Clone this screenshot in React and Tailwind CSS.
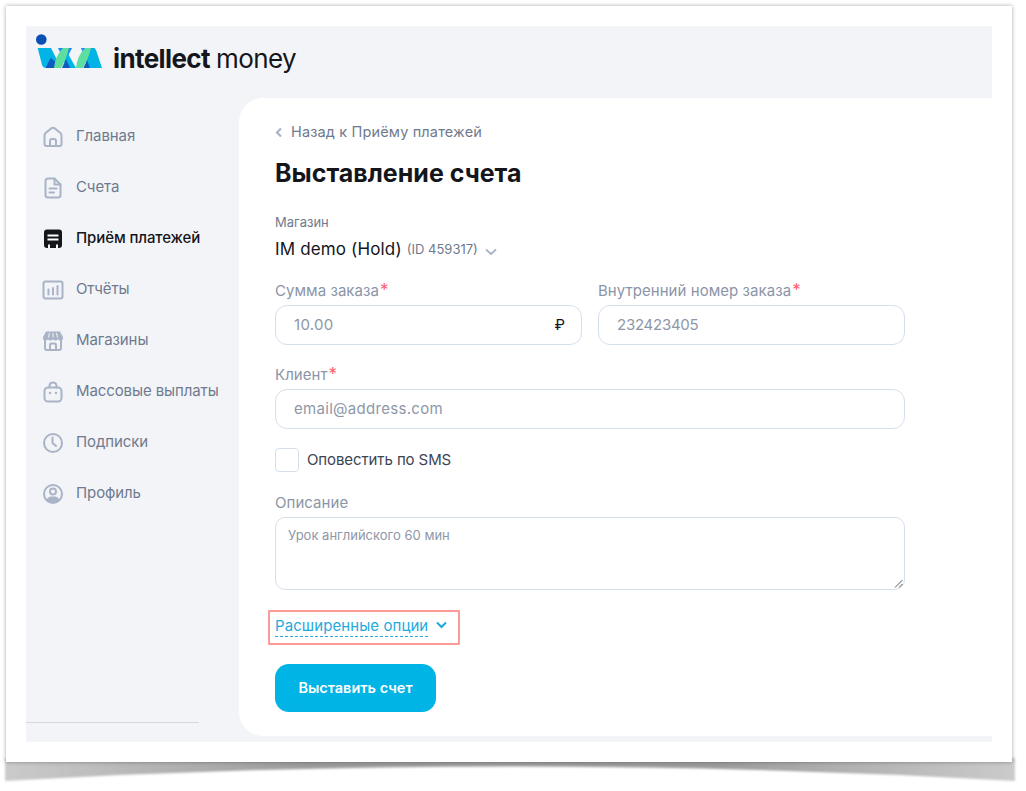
import React from "react";

const S = { fill: "none", stroke: "#a9b4c6", strokeWidth: 2, strokeLinecap: "round", strokeLinejoin: "round" };

const IconHome = () => (
  <svg width="22" height="22" viewBox="0 0 22 22">
    <path {...S} d="M2.5 9.5 Q2.5 8 3.5 7 L9 2.6 Q11 1 13 2.6 L18.5 7 Q19.5 8 19.5 9.5 V18 Q19.5 20 17.5 20 H4.5 Q2.5 20 2.5 18 Z" />
    <path {...S} d="M8 20 V15 Q8 13 10 13 H12 Q14 13 14 15 V20" />
  </svg>
);
const IconDoc = () => (
  <svg width="22" height="22" viewBox="0 0 22 22">
    <path {...S} d="M12.5 1.5 H6 Q3.5 1.5 3.5 4 V18 Q3.5 20.5 6 20.5 H16 Q18.5 20.5 18.5 18 V7.5 Z" />
    <path {...S} d="M12.5 1.5 V7.5 H18.5" />
    <path {...S} d="M7.5 11.5 H14.5 M7.5 15.5 H12" />
  </svg>
);
const IconPay = () => (
  <svg width="22" height="22" viewBox="0 0 22 22">
    <path fill="#14161c" d="M5 1.5 H17 Q20 1.5 20 4.5 V17 Q20 20 17 20 H16 V16.5 H14 V20 H8 V16.5 H6 V20 H5 Q2 20 2 17 V4.5 Q2 1.5 5 1.5 Z" />
    <path stroke="#fff" strokeWidth="2" d="M5.5 7.5 H16.5 M5.5 11.5 H16.5" />
  </svg>
);
const IconReport = () => (
  <svg width="22" height="22" viewBox="0 0 22 22">
    <rect {...S} x="1.5" y="2.5" width="19" height="17" rx="2" />
    <path {...S} d="M6.5 10.5 V15.5 M11 9 V15.5 M15.5 7 V15.5" />
  </svg>
);
const IconShop = () => (
  <svg width="22" height="22" viewBox="0 0 22 22">
    <path {...S} d="M3 10 V18 Q3 20 5 20 H17 Q19 20 19 18 V10" />
    <path fill="#a9b4c6" d="M4 1.5 H18 L21 7 V8 Q21 10.5 18.4 10.5 Q16.8 10.5 16 9.3 Q15 10.5 13.5 10.5 Q12 10.5 11 9.3 Q10 10.5 8.5 10.5 Q7 10.5 6 9.3 Q5.2 10.5 3.6 10.5 Q1 10.5 1 8 V7 Z" />
    <path stroke="#f3f4f8" strokeWidth="1" d="M7.5 3 L6.5 7.5 M11 3 V7.5 M14.5 3 L15.5 7.5" />
    <path {...S} d="M8 20 V15 Q8 13.5 9.5 13.5 H12.5 Q14 13.5 14 15 V20" />
  </svg>
);
const IconBag = () => (
  <svg width="22" height="22" viewBox="0 0 22 22">
    <rect {...S} x="2.5" y="6.5" width="17" height="14" rx="3.5" />
    <path {...S} d="M7.5 6.5 V5 Q7.5 1.5 11 1.5 Q14.5 1.5 14.5 5 V6.5" />
    <circle cx="8" cy="12" r="1.2" fill="#a9b4c6" />
    <circle cx="14" cy="12" r="1.2" fill="#a9b4c6" />
  </svg>
);
const IconClock = () => (
  <svg width="22" height="22" viewBox="0 0 22 22">
    <circle {...S} cx="11" cy="11" r="9" />
    <path {...S} d="M10.5 5.5 V11 L14 14" />
  </svg>
);
const IconUser = () => (
  <svg width="22" height="22" viewBox="0 0 22 22">
    <circle {...S} cx="11" cy="11" r="9" />
    <circle {...S} cx="11" cy="8.5" r="3" />
    <path fill="#a9b4c6" d="M4.5 17 Q6 13.5 9 13.5 H13 Q16 13.5 17.5 17 Q15 20 11 20 Q7 20 4.5 17 Z" />
  </svg>
);

const nav = [
  ["Главная", IconHome],
  ["Счета", IconDoc],
  ["Приём платежей", IconPay, true],
  ["Отчёты", IconReport],
  ["Магазины", IconShop],
  ["Массовые выплаты", IconBag],
  ["Подписки", IconClock],
  ["Профиль", IconUser],
];

const Logo = () => (
  <svg width="70" height="42" viewBox="33 30 70 42" className="shrink-0">
    <circle cx="41.3" cy="39.5" r="5.3" fill="#0a50b4" />
    <path fill="#00b4e6" d="M37.7 48 H51 L57 60 L54 68 H46 Q43 68 42 65 Z" />
    <path fill="#0f5cc0" d="M45.5 68 L50.5 58 L56 62 L58 68 Z" />
    <path fill="#1e8cf5" d="M58 48 H72 L68 56 H62 Z" />
    <path fill="#00b4e6" d="M67 52 L76 68 H68 L63 60 Q65 56 67 52 Z" />
    <path fill="#0f5cc0" d="M62 68 L66 59 L70 68 Z" />
    <path fill="#5fdf9f" d="M54 68 H61 Q66 60 69 48 H63 Q55 56 54 68 Z" />
    <path fill="#1e8cf5" d="M81 48 H95 L90 56 H84 Z" />
    <path fill="#00b4e6" d="M88 53 L92 48 H93 Q95 48 96 50 L102 68 H90 L85 60 Z" />
    <path fill="#0f5cc0" d="M83.5 68 L87 60 L90 68 Z" />
    <path fill="#5fdf9f" d="M76 68 H83 Q88 60 91 48 H85 Q77 56 76 68 Z" />
  </svg>
);

const Label = ({ children, req }) => (
  <div className="text-[15px] leading-[20px] text-[#8b95a7] tracking-[0.05px]">
    {children}
    {req && <span className="text-[#f9606f] text-[17px] leading-[14px] ml-[1px]">*</span>}
  </div>
);

const Field = ({ className, placeholder, suffix, track }) => (
  <div className={"h-[40px] rounded-[12px] border border-[#d5dfec] flex items-center justify-between pl-[18px] pr-[16px] bg-white " + (className || "")}>
    <span className={"text-[15px] text-[#8e97a8] " + (track || "tracking-[0.3px]")}>{placeholder}</span>
    {suffix && <span className="text-[15px] text-[#14161c]">{suffix}</span>}
  </div>
);

export default function App() {
  return (
    <div className="relative w-[1026px] h-[791px] overflow-hidden bg-white pt-[6px] pl-[6px]" style={{ fontFamily: "Inter, 'Liberation Sans', sans-serif" }}>
      <svg className="absolute left-0 top-0" width="1026" height="791" viewBox="0 0 1026 791">
        <defs>
          <linearGradient id="sh" x1="0" x2="1" y1="0" y2="0">
            <stop offset="0" stopColor="#cbcbcb" />
            <stop offset="0.3" stopColor="#9c9c9c" />
            <stop offset="0.7" stopColor="#9c9c9c" />
            <stop offset="1" stopColor="#cbcbcb" />
          </linearGradient>
          <filter id="bl" x="-2%" y="-50%" width="104%" height="200%">
            <feGaussianBlur stdDeviation="1" />
          </filter>
        </defs>
        <path fill="url(#sh)" filter="url(#bl)" d="M5 758 H1015 V781 Q510 752 5 781 Z" />
      </svg>
      <div className="relative w-[1006px] h-[756px] bg-white p-[20px] shadow-[0_0_4px_rgba(0,0,0,0.35)]">
        <div className="flex flex-col h-[716px] bg-[#f3f4f8]">
          <header className="h-[72px] flex items-start pl-[7px] pt-[4px] shrink-0">
            <Logo />
            <div className="mt-[11px] ml-[10px] text-[26px] leading-[36px] text-[#14161c] tracking-[-0.6px] flex">
              <span className="font-bold">intellect</span>
              <span className="font-normal ml-[6px]">money</span>
            </div>
          </header>
          <div className="flex flex-1 min-h-0">
            <aside className="w-[213px] shrink-0 flex flex-col pt-[13px]">
              <nav className="flex flex-col">
                {nav.map(([t, I, active]) => (
                  <div key={t} className="h-[51px] flex items-center pl-[16px]">
                    <span className="w-[22px] h-[22px] shrink-0"><I /></span>
                    <span className={"ml-[12px] text-[15px] whitespace-nowrap tracking-[-0.1px] " + (active ? "text-[#14161c] font-medium" : "text-[#6f7a8e]")}>{t}</span>
                  </div>
                ))}
              </nav>
              <div className="mt-auto mb-[19px] w-[173px] h-px bg-[#d3d8e2]" />
            </aside>
            <main className="flex-1 bg-white rounded-l-[24px] mb-[6px] pl-[36px] pt-[24px]">
              <div className="flex items-center h-[20px] text-[14.5px] text-[#6f7a8e] tracking-[0.15px]">
                <svg width="8" height="11" viewBox="0 0 8 11" className="mr-[8px]"><path d="M6 1.5 L2 5.5 L6 9.5" fill="none" stroke="#a9b4c6" strokeWidth="2.2" /></svg>
                Назад к Приёму платежей
              </div>
              <h1 className="mt-[11px] text-[25px] leading-[40px] font-bold text-[#14161c]">Выставление счета</h1>
              <div className="mt-[20px] text-[13px] leading-[18px] text-[#6f7a8e]">Магазин</div>
              <div className="mt-[7px] flex items-center h-[24px] text-[#14161c]">
                <span className="text-[17px] font-normal tracking-[0.15px]">IM demo (Hold)</span>
                <span className="ml-[5px] text-[13px] text-[#6f7a8e]">(ID 459317)</span>
                <svg width="12" height="8" viewBox="0 0 12 8" className="ml-[7px] mt-[3px]"><path d="M1 1.5 L6 6 L11 1.5" fill="none" stroke="#a9b4c6" strokeWidth="1.8" /></svg>
              </div>
              <div className="mt-[19px] w-[630px] grid grid-cols-[307px_307px] gap-x-[16px]">
                <div>
                  <Label req>Сумма заказа</Label>
                  <Field className="mt-[4px]" placeholder="10.00" suffix="₽" />
                </div>
                <div>
                  <Label req>Внутренний номер заказа</Label>
                  <Field className="mt-[4px]" placeholder="232423405" track="tracking-[-0.25px]" />
                </div>
              </div>
              <div className="mt-[20px] w-[630px]">
                <Label req>Клиент</Label>
                <Field className="mt-[4px]" placeholder="email@address.com" />
              </div>
              <div className="mt-[19px] flex items-center">
                <span className="w-[24px] h-[24px] rounded-[4px] border border-[#d5dfec] bg-white" />
                <span className="ml-[8px] text-[15px] tracking-[-0.1px] text-[#3d4452]">Оповестить по SMS</span>
              </div>
              <div className="mt-[21px]"><Label>Описание</Label></div>
              <div className="relative mt-[4px] w-[630px] h-[73px] rounded-[10px] border border-[#d5dfec] pl-[12px] pt-[8px] text-[13px] leading-[18px] text-[#8e97a8]">
                Урок английского 60 мин
                <svg width="9" height="9" viewBox="0 0 9 9" className="absolute right-[1px] bottom-[1px]"><path d="M1 8.5 L8.5 1 M5 8.5 L8.5 5" stroke="#555" strokeWidth="1" /></svg>
              </div>
              <div className="mt-[20px] -ml-[7px] w-[192px] h-[35px] border-2 border-[#fb9a96] rounded-[1px] pl-[5px] flex items-start">
                <span className="mt-[3px] text-[15px] leading-[21px] text-[#25a9dc] border-b border-dashed border-[#25a9dc] tracking-[0.08px] whitespace-nowrap">Расширенные опции</span>
                <svg width="11" height="8" viewBox="0 0 11 8" className="ml-[8px] mt-[9px]"><path d="M1 1.5 L5.5 6 L10 1.5" fill="none" stroke="#1aa9dc" strokeWidth="2" /></svg>
              </div>
              <button className="mt-[19px] block w-[161px] h-[48px] rounded-[14px] bg-[#00b4e6] text-white text-[14.5px] font-semibold">Выставить счет</button>
            </main>
          </div>
        </div>
      </div>
    </div>
  );
}
